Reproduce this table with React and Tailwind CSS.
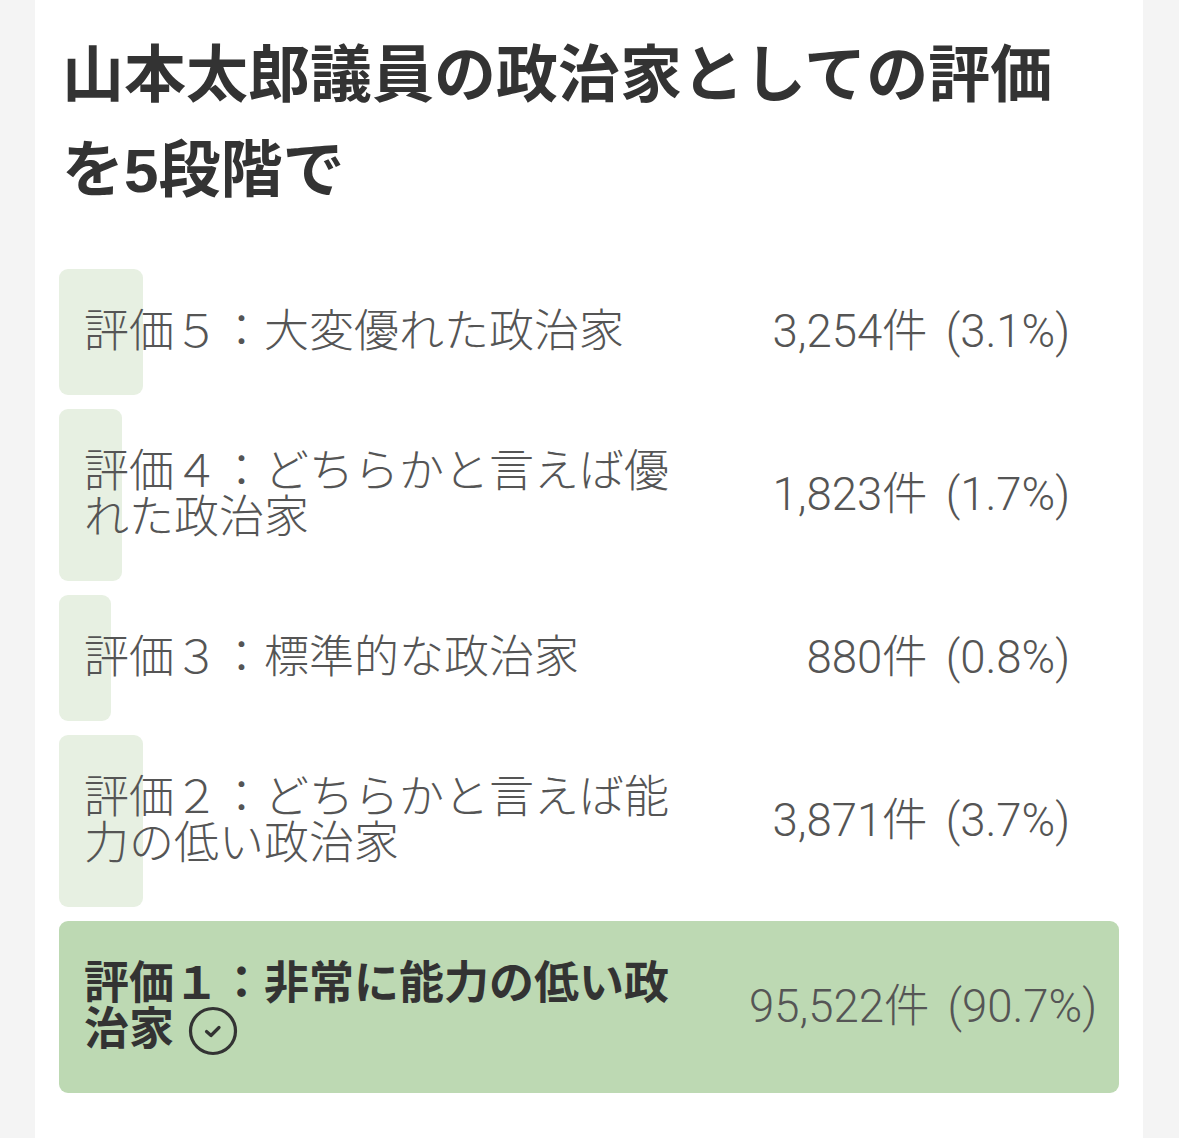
import React from "react";

const rows = [
  { label: "評価５：大変優れた政治家", count: "3,254件", pct: "(3.1%)", bar: 84 },
  { label: "評価４：どちらかと言えば優れた政治家", count: "1,823件", pct: "(1.7%)", bar: 63 },
  { label: "評価３：標準的な政治家", count: "880件", pct: "(0.8%)", bar: 52 },
  { label: "評価２：どちらかと言えば能力の低い政治家", count: "3,871件", pct: "(3.7%)", bar: 84 },
];

const font = { fontFamily: '"Liberation Sans","Noto Sans CJK JP",sans-serif' };
const numFont = { fontFamily: 'Roboto,"Noto Sans CJK JP",sans-serif' };

function CheckCircle() {
  return (
    <svg width="50" height="50" viewBox="0 0 50 50" className="inline-block align-middle ml-[14px] -my-[10px] relative top-[-2px]" fill="none">
      <circle cx="25" cy="25" r="22.5" stroke="#333" strokeWidth="3.2" />
      <path d="M18.5 25.5 L23 29.5 L31 21.5" stroke="#333" strokeWidth="3.2" strokeLinecap="round" strokeLinejoin="round" />
    </svg>
  );
}

export default function App() {
  return (
    <div className="min-h-[1138px] bg-[#f4f4f4] pl-[35px] pr-[36px]" style={font}>
      <div className="bg-white min-h-[1138px] px-[24px] pt-[28px] pb-[40px]">
        <h1 className="w-[1040px] text-[62px] leading-[95px] font-bold text-[#333] pl-[3px]">
          山本太郎議員の政治家としての評価を5段階で
        </h1>
        <div className="mt-[51px] flex flex-col gap-[14px]">
          {rows.map((r, i) => (
            <div key={i} className="relative flex items-center justify-between py-[40px] pl-[25px] pr-[49px]">
              <div className="absolute left-0 top-0 bottom-0 rounded-[9px] bg-[#e7f0e2]" style={{ width: r.bar }} />
              <div className="relative w-[600px] text-[45px] leading-[46px] font-light text-[#555]">{r.label}</div>
              <div className="relative text-[45.5px] leading-[46px] font-light text-[#555] whitespace-nowrap" style={numFont}>
                {r.count}<span className="ml-[18px]">{r.pct}</span>
              </div>
            </div>
          ))}
          <div className="relative flex items-center justify-between py-[40px] pl-[25px] pr-[22px] rounded-[9px] bg-[#bdd9b3]">
            <div className="relative w-[600px] text-[45px] leading-[46px] font-bold text-[#333]">
              評価１：非常に能力の低い政治家<CheckCircle />
            </div>
            <div className="relative text-[45.5px] leading-[46px] font-light text-[#555] whitespace-nowrap" style={numFont}>
              95,522件<span className="ml-[18px]">(90.7%)</span>
            </div>
          </div>
        </div>
      </div>
    </div>
  );
}
